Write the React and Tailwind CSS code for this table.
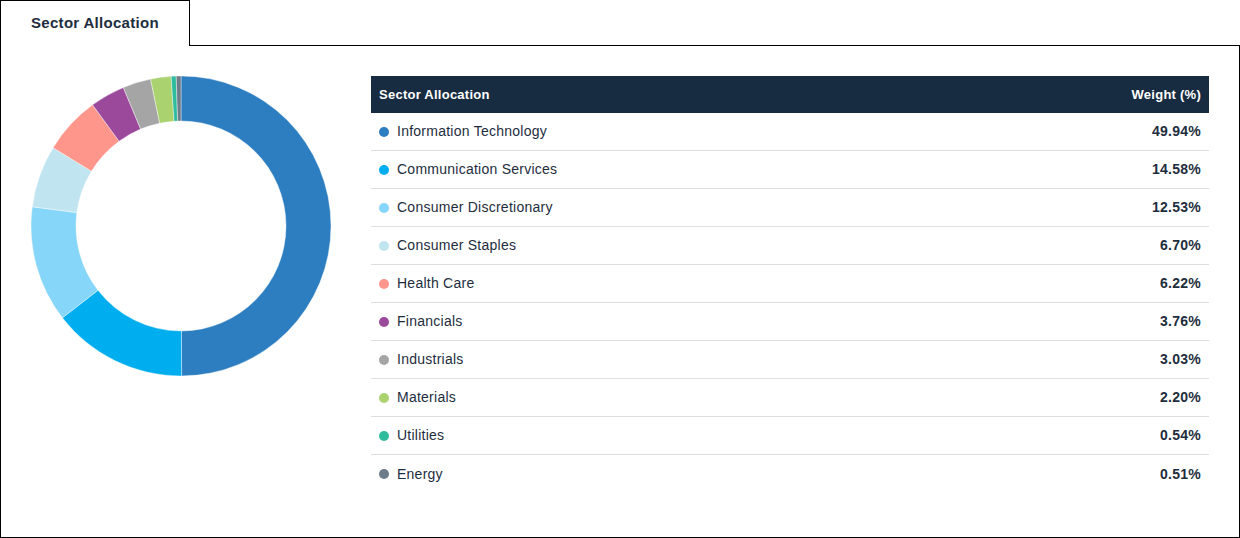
import React from 'react';

const sectors = [
  { name: 'Information Technology', weight: 49.94, color: '#2d7ec1' },
  { name: 'Communication Services', weight: 14.58, color: '#00aeef' },
  { name: 'Consumer Discretionary', weight: 12.53, color: '#85d6f8' },
  { name: 'Consumer Staples', weight: 6.7, color: '#c0e5f1' },
  { name: 'Health Care', weight: 6.22, color: '#ff968b' },
  { name: 'Financials', weight: 3.76, color: '#9b4a9b' },
  { name: 'Industrials', weight: 3.03, color: '#a5a5a5' },
  { name: 'Materials', weight: 2.2, color: '#aad26f' },
  { name: 'Utilities', weight: 0.54, color: '#2ebc9c' },
  { name: 'Energy', weight: 0.51, color: '#6e7b88' },
];

const polar = (cx, cy, r, a) => [cx + r * Math.sin(a), cy - r * Math.cos(a)];

const Donut = () => {
  const total = sectors.reduce((s, x) => s + x.weight, 0);
  const cx = 150, cy = 150, R = 150, r = 105;
  let start = 0;
  return (
    <svg width="300" height="300" viewBox="0 0 300 300" className="shrink-0">
      {sectors.map((s) => {
        const sweep = (s.weight / total) * Math.PI * 2;
        const end = start + sweep;
        const large = sweep > Math.PI ? 1 : 0;
        const [x1, y1] = polar(cx, cy, R, start);
        const [x2, y2] = polar(cx, cy, R, end);
        const [x3, y3] = polar(cx, cy, r, end);
        const [x4, y4] = polar(cx, cy, r, start);
        const d = `M${x1} ${y1} A${R} ${R} 0 ${large} 1 ${x2} ${y2} L${x3} ${y3} A${r} ${r} 0 ${large} 0 ${x4} ${y4} Z`;
        start = end;
        return <path key={s.name} d={d} fill={s.color} stroke="#ffffff" strokeWidth="0.4" />;
      })}
    </svg>
  );
};

const App = () => {
  return (
    <div className="w-[1240px] h-[538px] bg-white text-[#1e2d3d] tracking-[0.25px]" style={{ fontFamily: '"Liberation Sans", Arial, sans-serif' }}>
      <div className="relative z-10 w-[190px] h-[46px] -mb-px border border-b-0 border-black bg-white flex items-center pl-[30px] pb-[1px]">
        <span className="text-[15px] font-bold tracking-[0.3px]">Sector Allocation</span>
      </div>
      <div className="h-[493px] border border-black px-[30px] pt-[30px] flex gap-[40px]">
        <Donut />
        <div className="flex-1">
          <div className="h-[37px] bg-[#172c41] text-white text-[13px] font-bold flex items-center justify-between px-2">
            <span>Sector Allocation</span>
            <span>Weight (%)</span>
          </div>
          {sectors.map((s, i) => (
            <div
              key={s.name}
              className={`h-[38px] flex items-center justify-between px-2 text-[14px] ${i < sectors.length - 1 ? 'border-b border-[#dddddd]' : ''}`}
            >
              <div className="flex items-center gap-2">
                <span className="w-[10px] h-[10px] rounded-full" style={{ backgroundColor: s.color }} />
                <span>{s.name}</span>
              </div>
              <span className="font-bold">{s.weight.toFixed(2)}%</span>
            </div>
          ))}
        </div>
      </div>
    </div>
  );
};

export default App;
